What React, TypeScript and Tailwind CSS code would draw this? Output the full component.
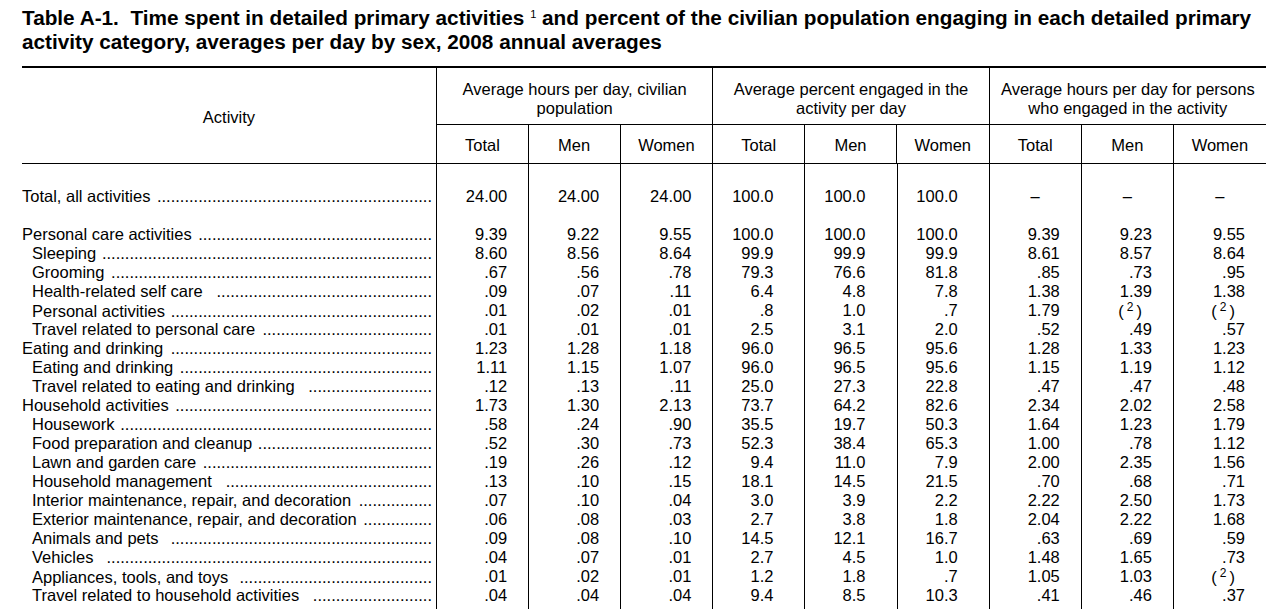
import React, { useLayoutEffect, useRef, useState } from "react";

type Row = { label: string; indent: boolean; vals: string[]; gap?: boolean };

const rows: Row[] = [
  { label: "Personal care activities", indent: false, vals: ["9.39", "9.22", "9.55", "100.0", "100.0", "100.0", "9.39", "9.23", "9.55"] },
  { label: "Sleeping", indent: true, vals: ["8.60", "8.56", "8.64", "99.9", "99.9", "99.9", "8.61", "8.57", "8.64"] },
  { label: "Grooming", indent: true, vals: [".67", ".56", ".78", "79.3", "76.6", "81.8", ".85", ".73", ".95"] },
  { label: "Health-related self care", indent: true, gap: true, vals: [".09", ".07", ".11", "6.4", "4.8", "7.8", "1.38", "1.39", "1.38"] },
  { label: "Personal activities", indent: true, vals: [".01", ".02", ".01", ".8", "1.0", ".7", "1.79", "(2)", "(2)"] },
  { label: "Travel related to personal care", indent: true, vals: [".01", ".01", ".01", "2.5", "3.1", "2.0", ".52", ".49", ".57"] },
  { label: "Eating and drinking", indent: false, vals: ["1.23", "1.28", "1.18", "96.0", "96.5", "95.6", "1.28", "1.33", "1.23"] },
  { label: "Eating and drinking", indent: true, vals: ["1.11", "1.15", "1.07", "96.0", "96.5", "95.6", "1.15", "1.19", "1.12"] },
  { label: "Travel related to eating and drinking", indent: true, gap: true, vals: [".12", ".13", ".11", "25.0", "27.3", "22.8", ".47", ".47", ".48"] },
  { label: "Household activities", indent: false, vals: ["1.73", "1.30", "2.13", "73.7", "64.2", "82.6", "2.34", "2.02", "2.58"] },
  { label: "Housework", indent: true, vals: [".58", ".24", ".90", "35.5", "19.7", "50.3", "1.64", "1.23", "1.79"] },
  { label: "Food preparation and cleanup", indent: true, vals: [".52", ".30", ".73", "52.3", "38.4", "65.3", "1.00", ".78", "1.12"] },
  { label: "Lawn and garden care", indent: true, vals: [".19", ".26", ".12", "9.4", "11.0", "7.9", "2.00", "2.35", "1.56"] },
  { label: "Household management", indent: true, gap: true, vals: [".13", ".10", ".15", "18.1", "14.5", "21.5", ".70", ".68", ".71"] },
  { label: "Interior maintenance, repair, and decoration", indent: true, vals: [".07", ".10", ".04", "3.0", "3.9", "2.2", "2.22", "2.50", "1.73"] },
  { label: "Exterior maintenance, repair, and decoration", indent: true, vals: [".06", ".08", ".03", "2.7", "3.8", "1.8", "2.04", "2.22", "1.68"] },
  { label: "Animals and pets", indent: true, gap: true, vals: [".09", ".08", ".10", "14.5", "12.1", "16.7", ".63", ".69", ".59"] },
  { label: "Vehicles", indent: true, gap: true, vals: [".04", ".07", ".01", "2.7", "4.5", "1.0", "1.48", "1.65", ".73"] },
  { label: "Appliances, tools, and toys", indent: true, gap: true, vals: [".01", ".02", ".01", "1.2", "1.8", ".7", "1.05", "1.03", "(2)"] },
  { label: "Travel related to household activities", indent: true, gap: true, vals: [".04", ".04", ".04", "9.4", "8.5", "10.3", ".41", ".46", ".37"] },
];

const gridCls = "grid grid-cols-[415px_repeat(9,minmax(0,1fr))]";

let dotW = 0;
function getDotWidth(): number {
  if (dotW) return dotW;
  const c = document.createElement("canvas").getContext("2d");
  if (c) {
    c.font = "16.5px 'Liberation Sans', Arial, sans-serif";
    dotW = c.measureText(".").width || 4.59;
  } else {
    dotW = 4.59;
  }
  return dotW;
}

function Dots({ gap }: { gap?: boolean }) {
  const ref = useRef<HTMLSpanElement>(null);
  const [n, setN] = useState(0);
  useLayoutEffect(() => {
    if (ref.current) {
      const w = ref.current.clientWidth;
      setN(Math.max(0, Math.floor((w - 0.5) / getDotWidth())));
    }
  }, []);
  return (
    <span
      ref={ref}
      className={`flex-1 min-w-0 block overflow-hidden whitespace-nowrap text-right ${gap ? "ml-[10px]" : "ml-[4px]"}`}
    >
      {".".repeat(n)}
    </span>
  );
}

function Label({ text, indent, gap }: { text: string; indent?: boolean; gap?: boolean }) {
  return (
    <div className={`flex items-center border-r border-black pr-[4px] overflow-hidden whitespace-nowrap ${indent ? "pl-[10px]" : ""}`}>
      <span className="shrink-0">{text}</span>
      <Dots gap={gap} />
    </div>
  );
}

function Val({ v, idx }: { v: string; idx: number }) {
  const last = idx === 8;
  const pct = idx >= 3 && idx <= 5;
  const border = last ? "" : "border-r border-black";
  if (v === "–") {
    return <div className={`${border} text-center`}>–</div>;
  }
  if (v === "(2)") {
    return (
      <div className={`${border} text-right pr-[31px]`}>
        (<span className="text-[12px] leading-none align-[6px] px-[3px]">2</span>)
      </div>
    );
  }
  return <div className={`${border} text-right ${pct ? "pr-[31px]" : "pr-[21px]"}`}>{v}</div>;
}

function Spacer({ h }: { h: string }) {
  return (
    <div className={`${gridCls} ${h}`}>
      <div className="border-r border-black" />
      {Array.from({ length: 9 }).map((_, i) => (
        <div key={i} className={i === 8 ? "" : "border-r border-black"} />
      ))}
    </div>
  );
}

export default function App() {
  const groups = [
    ["Average hours per day, civilian", "population"],
    ["Average percent engaged in the", "activity per day"],
    ["Average hours per day for persons", "who engaged in the activity"],
  ];
  return (
    <div className="bg-white text-black min-h-screen pl-[22px] pt-[6px] font-['Liberation_Sans',Arial,sans-serif]">
      <h1 className="font-bold text-[20.75px] leading-[24px] w-[1255px]">
        Table A-1.&nbsp; Time spent in detailed primary activities{" "}
        <span className="text-[11px] font-normal leading-none align-[7px]">1</span> and percent of the civilian population
        engaging in each detailed primary activity category, averages per day by sex, 2008 annual averages
      </h1>
      <div className="w-[1244px] mt-[12px] border-t-2 border-black text-[16.5px] leading-[19px]">
        {/* header */}
        <div className="flex border-b border-black">
          <div className="w-[415px] shrink-0 border-r border-black flex items-center justify-center h-[95px] pt-[3px]">
            Activity
          </div>
          <div className="flex-1 grid grid-cols-3">
            {groups.map((g, gi) => (
              <div key={gi} className={`flex flex-col ${gi < 2 ? "border-r border-black" : ""}`}>
                <div className="h-[57px] border-b border-black flex flex-col items-center justify-center text-center pt-[5px]">
                  <div>{g[0]}</div>
                  <div>{g[1]}</div>
                </div>
                <div className="h-[38px] grid grid-cols-3">
                  {["Total", "Men", "Women"].map((s, si) => (
                    <div
                      key={si}
                      className={`flex items-center justify-center pt-[2px] ${si < 2 ? "border-r border-black" : ""}`}
                    >
                      {s}
                    </div>
                  ))}
                </div>
              </div>
            ))}
          </div>
        </div>
        {/* body */}
        <Spacer h="h-[23px]" />
        <div className={`${gridCls} h-[19px]`}>
          <Label text="Total, all activities" />
          {["24.00", "24.00", "24.00", "100.0", "100.0", "100.0", "–", "–", "–"].map((v, i) => (
            <Val key={i} v={v} idx={i} />
          ))}
        </div>
        <Spacer h="h-[19px]" />
        {rows.map((r, ri) => (
          <div key={ri} className={`${gridCls} h-[19px]`}>
            <Label text={r.label} indent={r.indent} gap={r.gap} />
            {r.vals.map((v, i) => (
              <Val key={i} v={v} idx={i} />
            ))}
          </div>
        ))}
        <Spacer h="h-[19px]" />
      </div>
    </div>
  );
}
